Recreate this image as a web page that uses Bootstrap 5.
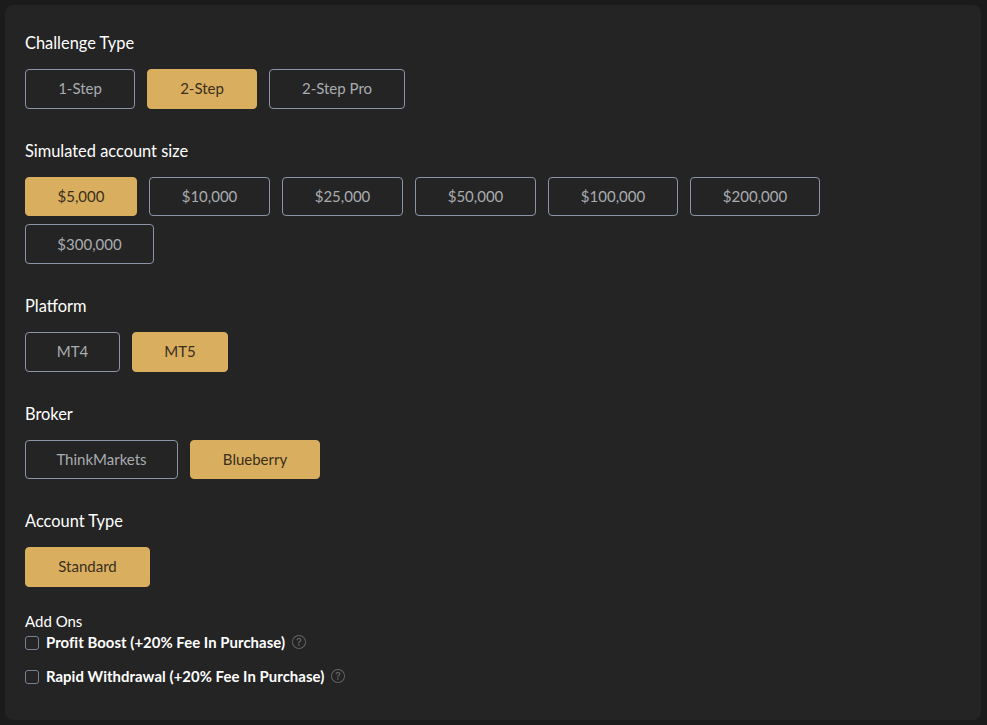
<!DOCTYPE html>
<html lang="en">
<head>
    <meta charset="UTF-8" />
    <title>Challenge Options</title>
    <meta name="viewport" content="width=device-width, initial-scale=1" />
    <link href="https://cdn.jsdelivr.net/npm/bootstrap@5.3.0/dist/css/bootstrap.min.css" rel="stylesheet" />
    <style>
        body { background: #1b1b1b; font-family: "Lato", "Liberation Sans", sans-serif; }
        .panel-box { margin: 5px 6px 5px 5px; height: 715px; padding: 26.2px 20px 0; background: #242424; border-radius: 8px; }
        .opt-group { margin-bottom: 30px; }
        .opt-title { margin: 0 0 14px; height: 24px; line-height: 24px; font-size: 16.4px; font-weight: 400; color: #fff; }
        .opt-row { row-gap: 8px; column-gap: 12px; max-width: 900px; }
        .opt-btn { height: 39.6px; padding: 0; font-size: 15px; line-height: 1; color: #a9acb0; background: transparent; border: 1px solid #8a94a6; border-radius: 4px; }
        .opt-btn:hover { color: #a9acb0; border-color: #8a94a6; }
        .opt-btn.picked { color: #3a2f1c; background: #d9ae5f; border-color: #d9ae5f; }
        .w-95 { width: 95px; } .w-96 { width: 96px; }
        .w-110 { width: 110px; } .w-112 { width: 112px; }
        .w-121 { width: 121px; } .w-125 { width: 125px; }
        .w-129 { width: 129px; } .w-130 { width: 130px; }
        .w-136 { width: 136px; } .w-153 { width: 153px; }
        .addon-title { height: 20px; line-height: 16px; font-size: 15px; color: #fff; margin-top: -4px; }
        .addon-row { height: 24px; margin-top: -3px; margin-bottom: 13px; font-size: 14.9px; letter-spacing: .05px; font-weight: 700; color: #fff; }
        .addon-row .form-check-input { width: 14px; height: 14px; margin: 2px 0 0; background-color: transparent; border: 1px solid #76808f; border-radius: 3px; }
        .addon-hint { width: 14px; height: 14px; fill: #666; }
        .addon-row.gap-2 { gap: 7px !important; }
    </style>
</head>
<body>

    <div class="panel-box">
        <div class="opt-group">
            <p class="opt-title">Challenge Type</p>
            <div class="d-flex flex-wrap opt-row">
                <button type="button" class="btn opt-btn w-110">1-Step</button>
                <button type="button" class="btn opt-btn picked w-110">2-Step</button>
                <button type="button" class="btn opt-btn w-136">2-Step Pro</button>
            </div>
        </div>

        <div class="opt-group">
            <p class="opt-title">Simulated account size</p>
            <div class="d-flex flex-wrap opt-row">
                <button type="button" class="btn opt-btn picked w-112">$5,000</button>
                <button type="button" class="btn opt-btn w-121">$10,000</button>
                <button type="button" class="btn opt-btn w-121">$25,000</button>
                <button type="button" class="btn opt-btn w-121">$50,000</button>
                <button type="button" class="btn opt-btn w-130">$100,000</button>
                <button type="button" class="btn opt-btn w-130">$200,000</button>
                <button type="button" class="btn opt-btn w-129">$300,000</button>
            </div>
        </div>

        <div class="opt-group">
            <p class="opt-title">Platform</p>
            <div class="d-flex flex-wrap opt-row">
                <button type="button" class="btn opt-btn w-95">MT4</button>
                <button type="button" class="btn opt-btn picked w-96">MT5</button>
            </div>
        </div>

        <div class="opt-group">
            <p class="opt-title">Broker</p>
            <div class="d-flex flex-wrap opt-row">
                <button type="button" class="btn opt-btn w-153">ThinkMarkets</button>
                <button type="button" class="btn opt-btn picked w-130">Blueberry</button>
            </div>
        </div>

        <div class="opt-group">
            <p class="opt-title">Account Type</p>
            <div class="d-flex flex-wrap opt-row">
                <button type="button" class="btn opt-btn picked w-125">Standard</button>
            </div>
        </div>

        <div class="addon-title">Add Ons</div>
        <label class="addon-row d-flex align-items-center gap-2">
            <input class="form-check-input" type="checkbox" />
            <span>Profit Boost (+20% Fee In Purchase)</span>
            <svg class="addon-hint" viewBox="0 0 16 16"><path d="M8 15A7 7 0 1 1 8 1a7 7 0 0 1 0 14zm0 1A8 8 0 1 0 8 0a8 8 0 0 0 0 16z"/><path d="M5.255 5.786a.237.237 0 0 0 .241.247h.825c.138 0 .248-.113.266-.25.09-.656.54-1.134 1.342-1.134.686 0 1.314.343 1.314 1.168 0 .635-.374.927-.965 1.371-.673.489-1.206 1.06-1.168 1.987l.003.217a.25.25 0 0 0 .25.246h.811a.25.25 0 0 0 .25-.25v-.105c0-.718.273-.927 1.01-1.486.609-.463 1.244-.977 1.244-2.056 0-1.511-1.276-2.241-2.673-2.241-1.267 0-2.655.59-2.75 2.286zm1.557 5.763c0 .533.425.927 1.01.927.609 0 1.028-.394 1.028-.927 0-.552-.42-.94-1.029-.94-.584 0-1.009.388-1.009.94z"/></svg>
        </label>
        <label class="addon-row d-flex align-items-center gap-2">
            <input class="form-check-input" type="checkbox" />
            <span>Rapid Withdrawal (+20% Fee In Purchase)</span>
            <svg class="addon-hint" viewBox="0 0 16 16"><path d="M8 15A7 7 0 1 1 8 1a7 7 0 0 1 0 14zm0 1A8 8 0 1 0 8 0a8 8 0 0 0 0 16z"/><path d="M5.255 5.786a.237.237 0 0 0 .241.247h.825c.138 0 .248-.113.266-.25.09-.656.54-1.134 1.342-1.134.686 0 1.314.343 1.314 1.168 0 .635-.374.927-.965 1.371-.673.489-1.206 1.06-1.168 1.987l.003.217a.25.25 0 0 0 .25.246h.811a.25.25 0 0 0 .25-.25v-.105c0-.718.273-.927 1.01-1.486.609-.463 1.244-.977 1.244-2.056 0-1.511-1.276-2.241-2.673-2.241-1.267 0-2.655.59-2.75 2.286zm1.557 5.763c0 .533.425.927 1.01.927.609 0 1.028-.394 1.028-.927 0-.552-.42-.94-1.029-.94-.584 0-1.009.388-1.009.94z"/></svg>
        </label>
    </div>

    <script src="https://cdn.jsdelivr.net/npm/bootstrap@5.3.0/dist/js/bootstrap.bundle.min.js"></script>
</body>
</html>
